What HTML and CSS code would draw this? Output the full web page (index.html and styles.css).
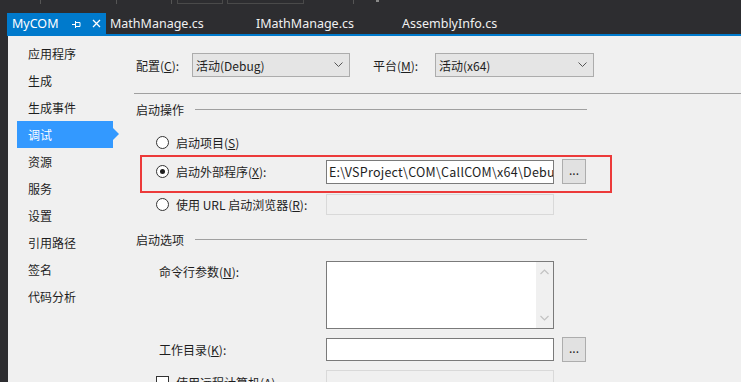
FILE: index.html
```html
<!DOCTYPE html>
<html lang="zh-CN">
<head>
    <meta charset="UTF-8">
    <title>MyCOM - 调试</title>
    <link rel="stylesheet" href="styles.css">
</head>
<body>
    <!-- reste de la barre d'outils -->
    <div class="toolbar">
        <span class="tick t1"></span>
        <span class="tick t2"></span>
        <span class="tick t3"></span>
        <span class="combo c1"></span>
        <span class="combo c2"></span>
        <span class="tick t4"></span>
        <span class="dot"></span>
    </div>

    <!-- onglets -->
    <div class="tabbar">
        <div class="tab active">
            <span class="tab-name">MyCOM</span>
            <svg class="pin" width="9" height="8" viewBox="0 0 9 8">
                <path d="M0 4.5h3M3.5 1v7M3.5 2.5h4.5v4h-4.5" fill="none" stroke="#fff" stroke-width="1"/>
            </svg>
            <svg class="close" width="9" height="9" viewBox="0 0 9 9">
                <path d="M1 1l7 7M8 1l-7 7" stroke="#fff" stroke-width="1.3"/>
            </svg>
        </div>
        <div class="tab">MathManage.cs</div>
        <div class="tab">IMathManage.cs</div>
        <div class="tab">AssemblyInfo.cs</div>
    </div>

    <div class="workspace">
        <nav class="nav">
            <div class="nav-item">应用程序</div>
            <div class="nav-item">生成</div>
            <div class="nav-item">生成事件</div>
            <div class="nav-item selected">调试</div>
            <div class="nav-item">资源</div>
            <div class="nav-item">服务</div>
            <div class="nav-item">设置</div>
            <div class="nav-item">引用路径</div>
            <div class="nav-item">签名</div>
            <div class="nav-item">代码分析</div>
        </nav>

        <main class="page">
            <div class="config-row">
                <span class="cfg-label">配置(<u>C</u>):</span>
                <div class="select sel1">
                    <span>活动(Debug)</span>
                    <svg width="9" height="6" viewBox="0 0 9 6"><path d="M0.5 0.5l4 4 4-4" fill="none" stroke="#555" stroke-width="1"/></svg>
                </div>
                <span class="cfg-label plat">平台(<u>M</u>):</span>
                <div class="select sel2">
                    <span>活动(x64)</span>
                    <svg width="9" height="6" viewBox="0 0 9 6"><path d="M0.5 0.5l4 4 4-4" fill="none" stroke="#555" stroke-width="1"/></svg>
                </div>
            </div>

            <div class="separator"></div>

            <div class="group-title"><span>启动操作</span><span class="group-line"></span></div>

            <div class="row r-project">
                <label class="opt"><span class="radio"></span>启动项目(<u>S</u>)</label>
            </div>
            <div class="row r-external">
                <label class="opt"><span class="radio checked"></span>启动外部程序(<u>X</u>):</label>
                <div class="field path">E:\VSProject\COM\CallCOM\x64\Debu</div>
                <div class="btn">...</div>
                <div class="highlight"></div>
            </div>
            <div class="row r-url">
                <label class="opt"><span class="radio"></span>使用 URL 启动浏览器(<u>R</u>):</label>
                <div class="field disabled"></div>
            </div>

            <div class="group-title second"><span>启动选项</span><span class="group-line"></span></div>

            <div class="row r-args">
                <label class="plain">命令行参数(<u>N</u>):</label>
                <div class="field area">
                    <div class="scroll">
                        <svg width="9" height="6" viewBox="0 0 9 6"><path d="M0.5 5l4-4 4 4" fill="none" stroke="#c2c2c2" stroke-width="1.2"/></svg>
                        <svg width="9" height="6" viewBox="0 0 9 6"><path d="M0.5 1l4 4 4-4" fill="none" stroke="#c2c2c2" stroke-width="1.2"/></svg>
                    </div>
                </div>
            </div>
            <div class="row r-dir">
                <label class="plain">工作目录(<u>K</u>):</label>
                <div class="field"></div>
                <div class="btn">...</div>
            </div>
            <div class="row r-remote">
                <label class="opt"><span class="check"></span>使用远程计算机(A)</label>
                <div class="field disabled"></div>
            </div>
        </main>
    </div>
</body>
</html>
```

FILE: styles.css
```css
body {
    margin: 0;
    background-color: #2d2d30;
    font-family: "Noto Sans CJK SC", "Noto Sans", sans-serif;
    font-size: 12px;
    color: #1e1e1e;
    height: 382px;
    overflow: hidden;
}
u {
    text-decoration: underline;
    text-underline-offset: 1px;
}

/* barre d'outils */
.toolbar {
    height: 13px;
    display: flex;
    align-items: flex-start;
}
.tick {
    width: 1px;
    height: 4px;
    background-color: #555;
}
.t1 { margin-left: 40px; }
.t2 { margin-left: 75px; }
.t3 { margin-left: 54px; }
.combo {
    height: 3px;
    border: 1px solid #4a4a4a;
    border-top: none;
}
.c1 { margin-left: 5px; width: 44px; }
.c2 { margin-left: 4px; width: 75px; }
.t4 { margin-left: 49px; }
.dot {
    margin-left: 22px;
    width: 3px;
    height: 2px;
    background-color: #888;
}

/* onglets */
.tabbar {
    margin-left: 7px;
    height: 21px;
    display: flex;
    border-bottom: 2px solid #007acc;
}
.tab {
    width: 142px;
    padding-left: 4px;
    color: #f1f1f1;
    font-family: "Noto Sans", sans-serif;
    font-size: 12.5px;
    line-height: 21px;
}
.tab.active {
    width: 94px;
    padding-left: 5px;
    background-color: #007acc;
    display: flex;
    align-items: center;
    color: #fff;
}
.tab-name {
    width: 60px;
}
.pin {
    margin-right: 11px;
}

/* zone principale */
.workspace {
    margin-left: 8px;
    height: 346px;
    background-color: #f0f0f0;
    display: flex;
}
.nav {
    width: 126px;
    padding-top: 4px;
    flex-shrink: 0;
}
.nav-item {
    position: relative;
    margin-left: 9px;
    width: 96px;
    padding-left: 11px;
    box-sizing: border-box;
    height: 27px;
    line-height: 27px;
}
.nav-item.selected {
    background-color: #3399ff;
    color: #fff;
}
.nav-item.selected::after {
    content: "";
    position: absolute;
    right: -6px;
    top: 7px;
    border-left: 6px solid #3399ff;
    border-top: 6px solid transparent;
    border-bottom: 6px solid transparent;
}

.page {
    flex: 1;
    padding-top: 17px;
}
.config-row {
    display: flex;
    align-items: center;
    height: 24px;
}
.cfg-label {
    margin-left: 2px;
    width: 56px;
}
.cfg-label.plat {
    margin-left: 23px;
    width: 62px;
}
.select {
    height: 24px;
    box-sizing: border-box;
    border: 1px solid #acacac;
    background-color: #e5e5e5;
    display: flex;
    align-items: center;
    justify-content: space-between;
    padding: 0 6px 0 3px;
}
.sel1 { width: 158px; }
.sel2 { width: 159px; }

.separator {
    margin-top: 16px;
    height: 1px;
    background-color: #a0a0a0;
}
.group-title {
    margin-top: 7px;
    width: 453px;
    height: 16px;
    display: flex;
    align-items: center;
}
.group-title span:first-child {
    margin-left: 2px;
    margin-right: 11px;
}
.group-line {
    flex: 1;
    height: 1px;
    background-color: #a0a0a0;
}
.group-title.second {
    margin-top: 16px;
}

/* lignes d'options */
.row {
    position: relative;
    display: flex;
    align-items: center;
}
.row label {
    width: 192px;
    flex-shrink: 0;
    box-sizing: border-box;
    display: flex;
    align-items: center;
}
.opt {
    padding-left: 22px;
}
.plain {
    padding-left: 25px;
}
.radio {
    width: 11px;
    height: 11px;
    border: 1px solid #333;
    border-radius: 50%;
    background-color: #fff;
    margin-right: 7px;
    display: flex;
    align-items: center;
    justify-content: center;
}
.radio.checked::before {
    content: "";
    width: 5px;
    height: 5px;
    border-radius: 50%;
    background-color: #1e1e1e;
}
.check {
    width: 11px;
    height: 11px;
    border: 1px solid #333;
    background-color: #fff;
    margin-right: 7px;
}
.field {
    width: 228px;
    height: 24px;
    flex-shrink: 0;
    box-sizing: border-box;
    border: 1px solid #7a7a7a;
    background-color: #fff;
    padding-left: 2px;
    line-height: 22px;
    white-space: nowrap;
    overflow: hidden;
}
.field.path {
    font-size: 12.5px;
    letter-spacing: 0.25px;
}
.field.disabled {
    border-color: #d9d9d9;
    background-color: #f0f0f0;
}
.btn {
    margin-left: 8px;
    width: 24px;
    height: 25px;
    box-sizing: border-box;
    border: 1px solid #adadad;
    background-color: #e1e1e1;
    text-align: center;
    line-height: 20px;
}
.highlight {
    position: absolute;
    left: 6px;
    top: -4px;
    width: 472px;
    height: 38px;
    box-sizing: border-box;
    border: 2px solid #ec3a3a;
}

.r-project {
    margin-top: 15px;
    height: 20px;
}
.r-external {
    margin-top: 7px;
}
.r-url {
    margin-top: 10px;
}
.r-url .field {
    height: 21px;
}
.r-args {
    margin-top: 14px;
    align-items: flex-start;
}
.r-args label {
    padding-top: 2px;
}
.field.area {
    height: 68px;
    display: flex;
    justify-content: flex-end;
    padding: 0;
}
.scroll {
    width: 17px;
    background-color: #f0f0f0;
    display: flex;
    flex-direction: column;
    justify-content: space-between;
    align-items: center;
    padding: 7px 0;
}
.r-dir {
    margin-top: 8px;
}
.r-dir .field {
    height: 23px;
}
.r-remote {
    margin-top: 8px;
    align-items: flex-start;
}
.r-remote label {
    padding-top: 4px;
}
```
